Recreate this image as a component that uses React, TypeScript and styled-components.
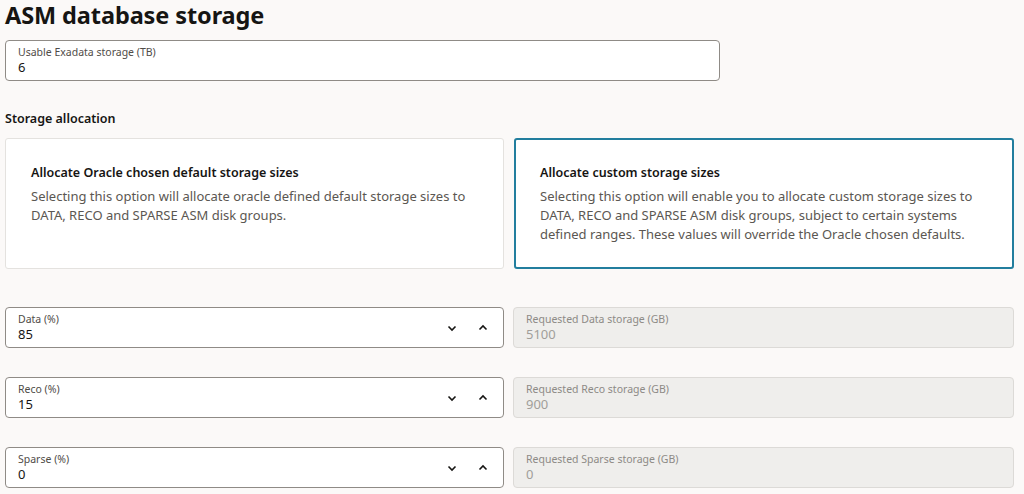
import React from "react";
import styled, { createGlobalStyle } from "styled-components";

const G = createGlobalStyle`
  body { margin: 0; background: #fbf9f8; font-family: "Noto Sans", "Open Sans", sans-serif; color: #161513; }
`;
const Page = styled.div`padding: 0 11px 0 5px; width: 1008px;`;
const Title = styled.h1`margin: 0 0 9px; font-size: 23.5px; font-weight: 700; line-height: 31px; letter-spacing: -0.1px;`;
const Field = styled.div<{ $w?: number; $ro?: boolean }>`
  box-sizing: border-box; height: 41px; width: ${p => (p.$w ? p.$w + "px" : "100%")};
  border: 1px solid ${p => (p.$ro ? "#dcdad7" : "#8f8b86")}; border-radius: 4px;
  background: ${p => (p.$ro ? "#efeeec" : "#fff")};
  display: flex; align-items: center; padding: 0 12px;
`;
const FieldText = styled.div`flex: 1; display: flex; flex-direction: column;`;
const Label = styled.span<{ $ro?: boolean }>`font-size: 10.5px; line-height: 13px; color: ${p => (p.$ro ? "#8d8a86" : "#4f4c48")};`;
const Value = styled.span<{ $ro?: boolean }>`font-size: 13px; line-height: 17px; color: ${p => (p.$ro ? "#a19e9a" : "#161513")};`;
const Section = styled.div`margin-top: 30px; font-size: 12.5px; font-weight: 600; line-height: 16px;`;
const Cards = styled.div`display: grid; grid-template-columns: 499px 500px; gap: 10px; margin-top: 11px;`;
const Card = styled.div<{ $sel?: boolean }>`
  box-sizing: border-box; height: 131px; background: #fff; border-radius: 3px;
  border: ${p => (p.$sel ? "2px solid #227e9e" : "1px solid #e4e2df")};
  padding: ${p => (p.$sel ? "25px 24px" : "26px 25px")};
`;
const CardTitle = styled.div`font-size: 12.5px; font-weight: 600; line-height: 16px; margin-bottom: 6px;`;
const CardText = styled.div`font-size: 13px; line-height: 19px; color: #5b5752;`;
const Rows = styled.div`display: flex; flex-direction: column; gap: 29px; padding-top: 38px;`;
const Row = styled.div`display: grid; grid-template-columns: 499px 501px; gap: 9px;`;
const Spin = styled.div`display: flex; gap: 19px; margin-right: 2px;`;

const Chev = ({ up }: { up?: boolean }) => (
  <svg width="12" height="12" viewBox="0 0 12 12">
    <path d={up ? "M2.5 7.5 L6 4 L9.5 7.5" : "M2.5 4.5 L6 8 L9.5 4.5"} fill="none" stroke="#161513" strokeWidth="1.6" />
  </svg>
);

const rows = [
  ["Data (%)", "85", "Requested Data storage (GB)", "5100"],
  ["Reco (%)", "15", "Requested Reco storage (GB)", "900"],
  ["Sparse (%)", "0", "Requested Sparse storage (GB)", "0"],
];

export default function App() {
  return (
    <Page>
      <G />
      <Title>ASM database storage</Title>
      <Field $w={715}>
        <FieldText><Label>Usable Exadata storage (TB)</Label><Value>6</Value></FieldText>
      </Field>
      <Section>Storage allocation</Section>
      <Cards>
        <Card>
          <CardTitle>Allocate Oracle chosen default storage sizes</CardTitle>
          <CardText>Selecting this option will allocate oracle defined default storage sizes to DATA, RECO and SPARSE ASM disk groups.</CardText>
        </Card>
        <Card $sel>
          <CardTitle>Allocate custom storage sizes</CardTitle>
          <CardText>Selecting this option will enable you to allocate custom storage sizes to DATA, RECO and SPARSE ASM disk groups, subject to certain systems defined ranges. These values will override the Oracle chosen defaults.</CardText>
        </Card>
      </Cards>
      <Rows>
        {rows.map(r => (
          <Row key={r[0]}>
            <Field>
              <FieldText><Label>{r[0]}</Label><Value>{r[1]}</Value></FieldText>
              <Spin><Chev /><Chev up /></Spin>
            </Field>
            <Field $ro>
              <FieldText><Label $ro>{r[2]}</Label><Value $ro>{r[3]}</Value></FieldText>
            </Field>
          </Row>
        ))}
      </Rows>
    </Page>
  );
}
